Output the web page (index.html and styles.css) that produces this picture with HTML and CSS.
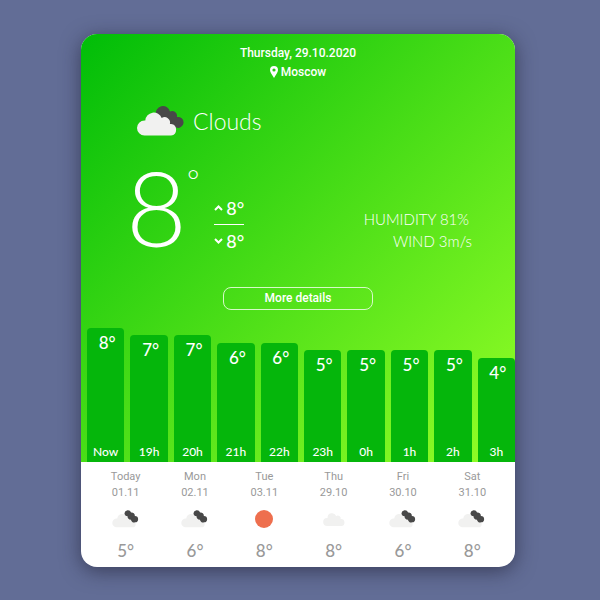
FILE: index.html
```html
<!DOCTYPE html>
<html lang="en">
<head>
<meta charset="utf-8">
<title>Weather</title>
<link rel="stylesheet" href="styles.css">
</head>
<body>
<svg class="defs" aria-hidden="true">
  <symbol id="cloud" viewBox="0 0 41 26"><path d="M8 26a7.500 7.500 0 0 1-.3-15H8.500a8.300 8.300 0 0 1 16-3.500 5.500 5.500 0 0 1 8.500 5.500 6.500 6.500 0 0 1 1 13z"/></symbol>
  <symbol id="clouds" viewBox="0 0 48 30">
    <path class="dark" d="M20 9a7 7 0 0 1 14-3.500 5 5 0 0 1 7 5.500 5.500 5.500 0 1 1-1 10.500L30 16z"/>
    <path class="light" d="M8.500 29.500a7.500 7.500 0 0 1 0-15h.8a8.500 8.500 0 0 1 16.400-2.500 5.500 5.500 0 0 1 8.200 6h1.200a5.800 5.800 0 0 1 0 11.500z"/>
  </symbol>
  <symbol id="clouds-small" viewBox="0 0 27 17">
    <path class="light" d="M4.500 16.500a4.200 4.200 0 0 1 0-8.400h.6a4.900 4.900 0 0 1 9.300-1.600 3.300 3.300 0 0 1 4.600 3.500h.6a3.250 3.250 0 0 1 0 6.500z"/>
    <path class="dark" d="M12 3a3.300 3.300 0 0 1 6.400-.7 3 3 0 0 1 3.600 3.200 3 3 0 1 1 .2 6.200 3 3 0 0 1-4-2.600 3 3 0 0 1-3.200-3.200A3.200 3.200 0 0 1 12 3z"/>
  </symbol>
</svg>
<main class="card">
  <section class="current">
    <header class="place">
      <p>Thursday, 29.10.2020</p>
      <p><svg class="pin" viewBox="0 0 8 12" aria-hidden="true"><path fill-rule="evenodd" d="M4 0a4 4 0 0 1 4 4c0 2-1.500 4-4 8C1.500 8 0 6 0 4a4 4 0 0 1 4-4zm0 2.400a1.600 1.600 0 1 0 0 3.200 1.600 1.600 0 0 0 0-3.200z"/></svg> Moscow</p>
    </header>
    <div class="condition">
      <svg class="condition-icon" aria-hidden="true"><use href="#clouds"/></svg>
      <h1>Clouds</h1>
    </div>
    <div class="stats">
      <div class="temperature">8<sup>°</sup></div>
      <div class="range">
        <p><svg viewBox="0 0 9 6" aria-hidden="true"><path d="M1 5l3.500-3.500L8 5"/></svg>8°</p>
        <p><svg viewBox="0 0 9 6" aria-hidden="true"><path d="M1 1l3.500 3.500L8 1"/></svg>8°</p>
      </div>
      <div class="air">
        <p class="humidity">HUMIDITY 81%</p>
        <p>WIND 3m/s</p>
      </div>
    </div>
    <button class="more" type="button">More details</button>
    <ol class="hours">
      <li class="t8"><b>8°</b><span>Now</span></li>
      <li class="t7"><b>7°</b><span>19h</span></li>
      <li class="t7"><b>7°</b><span>20h</span></li>
      <li class="t6"><b>6°</b><span>21h</span></li>
      <li class="t6"><b>6°</b><span>22h</span></li>
      <li class="t5"><b>5°</b><span>23h</span></li>
      <li class="t5"><b>5°</b><span>0h</span></li>
      <li class="t5"><b>5°</b><span>1h</span></li>
      <li class="t5"><b>5°</b><span>2h</span></li>
      <li class="t4"><b>4°</b><span>3h</span></li>
    </ol>
  </section>
  <ol class="days">
    <li><p>Today</p><p>01.11</p><svg class="icon" aria-hidden="true"><use href="#clouds-small"/></svg><b>5°</b></li>
    <li><p>Mon</p><p>02.11</p><svg class="icon" aria-hidden="true"><use href="#clouds-small"/></svg><b>6°</b></li>
    <li><p>Tue</p><p>03.11</p><svg class="icon" viewBox="0 0 28 18" aria-hidden="true"><circle class="sun" cx="14" cy="9" r="9"/></svg><b>8°</b></li>
    <li><p>Thu</p><p>29.10</p><svg class="icon single" aria-hidden="true"><use href="#cloud"/></svg><b>8°</b></li>
    <li><p>Fri</p><p>30.10</p><svg class="icon" aria-hidden="true"><use href="#clouds-small"/></svg><b>6°</b></li>
    <li><p>Sat</p><p>31.10</p><svg class="icon" aria-hidden="true"><use href="#clouds-small"/></svg><b>8°</b></li>
  </ol>
</main>
</body>
</html>
```

FILE: styles.css
```css
* { box-sizing: border-box; }
body {
  margin: 0;
  padding: 34px 85px 33px 81px;
  background: #626d96;
  font-family: Roboto, sans-serif;
}
p, h1, ol { margin: 0; padding: 0; }
ol { list-style: none; }
.defs { position: absolute; width: 0; height: 0; }
.dark { fill: #484848; }
.light { fill: #f1f1f0; }

.card {
  border-radius: 16px;
  overflow: hidden;
  background: #fff;
  box-shadow: 0 4px 20px rgba(30, 30, 50, .6);
}
.current {
  display: flex;
  flex-direction: column;
  padding-top: 10px;
  color: #fff;
  background: linear-gradient(135deg, #00bd08, #95ff27);
}
.place {
  text-align: center;
  font-size: 12px;
  font-weight: 500;
  line-height: 19px;
}
.pin { width: 8px; height: 12px; fill: #fff; vertical-align: -2px; }

.condition {
  display: flex;
  align-items: center;
  gap: 9px;
  margin: 19px 0 0 55px;
  height: 40px;
}
.condition-icon { width: 48px; height: 30px; }
h1 { font: 300 23px/40px Lato, sans-serif; }

.stats {
  display: flex;
  padding: 0 43px 0 45px;
  height: 146px;
  font-family: Lato, sans-serif;
}
.temperature {
  display: flex;
  font-size: 105px;
  font-weight: 300;
  line-height: 130px;
}
.temperature sup { font-size: 30px; line-height: 76px; font-weight: 300; }
.range {
  margin: 51px 0 0 15px;
  font-size: 18px;
  font-weight: 500;
  line-height: 32px;
}
.range p { display: flex; align-items: center; gap: 3px; }
.range p + p { border-top: 1px solid #fff; }
.range svg { width: 9px; height: 6px; fill: none; stroke: #fff; stroke-width: 2; }
.air {
  margin: 67px 0 0 auto;
  text-align: right;
  font-size: 15px;
  font-weight: 300;
  line-height: 22px;
}
.humidity { padding-right: 3px; }

.more {
  align-self: center;
  width: 150px;
  height: 23px;
  padding: 0;
  border: 1px solid #d6fac8;
  border-radius: 8px;
  background: none;
  color: #fff;
  font: 500 12px/19px Roboto, sans-serif;
}

.hours {
  display: grid;
  grid-template-columns: repeat(10, 1fr);
  align-items: end;
  margin-top: 18px;
  font-family: Lato, sans-serif;
}
.hours li {
  display: flex;
  flex-direction: column;
  justify-content: space-between;
  align-items: center;
  margin-left: 6px;
  padding: 4px 0 1px;
  border-radius: 4px 4px 0 0;
  background: #05b60b;
}
.hours b { padding-left: 3px; font-size: 17px; font-weight: 500; line-height: 21px; }
.hours span { font-size: 12px; font-weight: 500; line-height: 18px; }
.t8 { height: 134px; }
.t7 { height: 127px; }
.t6 { height: 119px; }
.t5 { height: 112px; }
.t4 { height: 104px; }

.days {
  display: grid;
  grid-template-columns: repeat(6, 1fr);
  padding: 7px 8px 6px 10px;
  color: #999;
}
.days li { display: flex; flex-direction: column; align-items: center; }
.days p { font-size: 11px; line-height: 16px; }
.days b { font: 500 17px/20px Lato, sans-serif; }
.icon { width: 28px; height: 18px; margin: 9px 0 13px; }
.single { width: 22px; fill: #f1f1f0; }
.sun { fill: #ee6f4e; }
```
